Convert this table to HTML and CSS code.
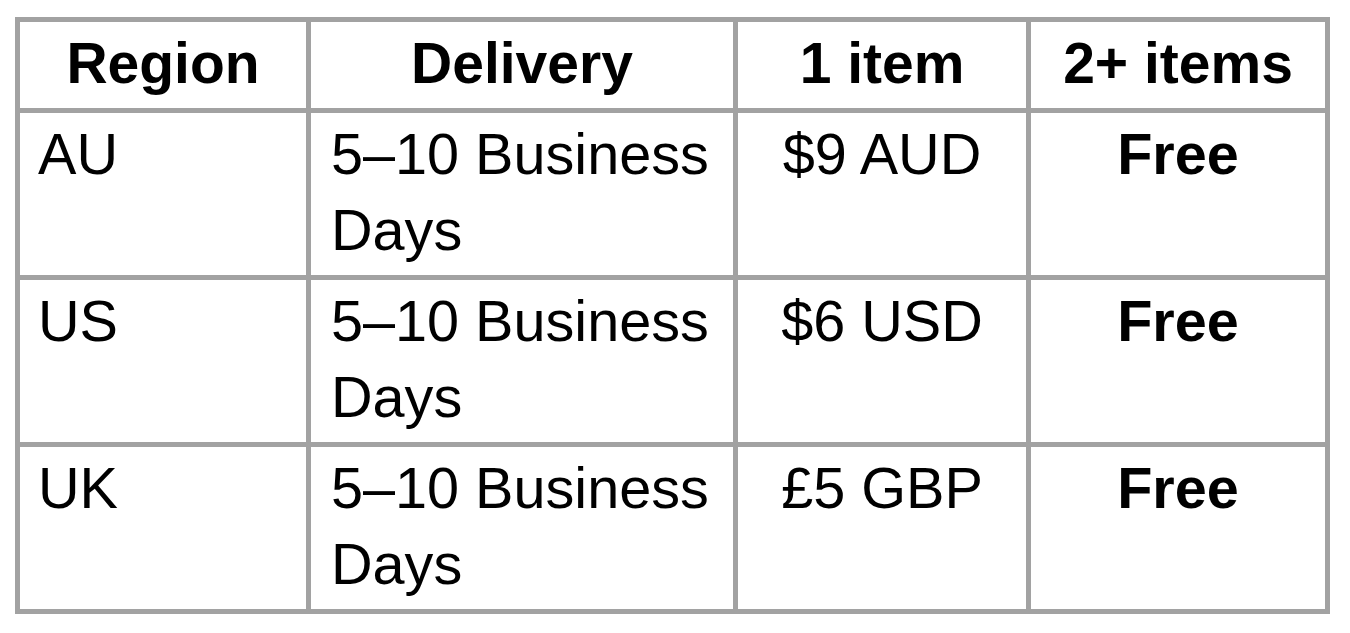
FILE: index.html
```html
<!DOCTYPE html>
<html lang="en">
<head>
<meta charset="utf-8">
<title>Shipping</title>
<link rel="stylesheet" href="styles.css">
</head>
<body>
<table class="ship">
  <colgroup>
    <col class="c1"><col class="c2"><col class="c3"><col class="c4">
  </colgroup>
  <thead>
    <tr class="head">
      <th>Region</th>
      <th>Delivery</th>
      <th>1 item</th>
      <th>2+ items</th>
    </tr>
  </thead>
  <tbody>
    <tr class="row">
      <td>AU</td>
      <td class="delivery">5–10 Business Days</td>
      <td class="center">$9 AUD</td>
      <td class="center bold">Free</td>
    </tr>
    <tr class="row">
      <td>US</td>
      <td class="delivery">5–10 Business Days</td>
      <td class="center">$6 USD</td>
      <td class="center bold">Free</td>
    </tr>
    <tr class="row">
      <td>UK</td>
      <td class="delivery">5–10 Business Days</td>
      <td class="center">£5 GBP</td>
      <td class="center bold">Free</td>
    </tr>
  </tbody>
</table>
</body>
</html>
```

FILE: styles.css
```css
html, body {
  margin: 0;
  background: #ffffff;
}
body {
  padding: 17px 15px;
  font-family: "Liberation Sans", Arial, sans-serif;
  color: #000;
}
.ship {
  table-layout: fixed;
  border-collapse: separate;
  border-spacing: 0;
  width: 1315px;
  border-top: 5px solid #a2a2a2;
  border-left: 5px solid #a2a2a2;
  font-size: 57px;
  line-height: 76px;
}
.c1 { width: 291px; }
.c2 { width: 427px; }
.c3 { width: 293px; }
.c4 { width: 299px; }
.ship th,
.ship td {
  border-right: 5px solid #a2a2a2;
  border-bottom: 5px solid #a2a2a2;
  padding: 3px 18px 7px;
  vertical-align: top;
  text-align: left;
  font-weight: normal;
}
.ship td {
  font-size: 57.6px;
}
.ship th {
  text-align: center;
  font-weight: bold;
  height: 76px;
}
.row td {
  height: 152px;
}
.ship td.delivery {
  padding-left: 20px;
}
.ship td.center {
  text-align: center;
}
.ship td.bold {
  font-weight: bold;
}
```
